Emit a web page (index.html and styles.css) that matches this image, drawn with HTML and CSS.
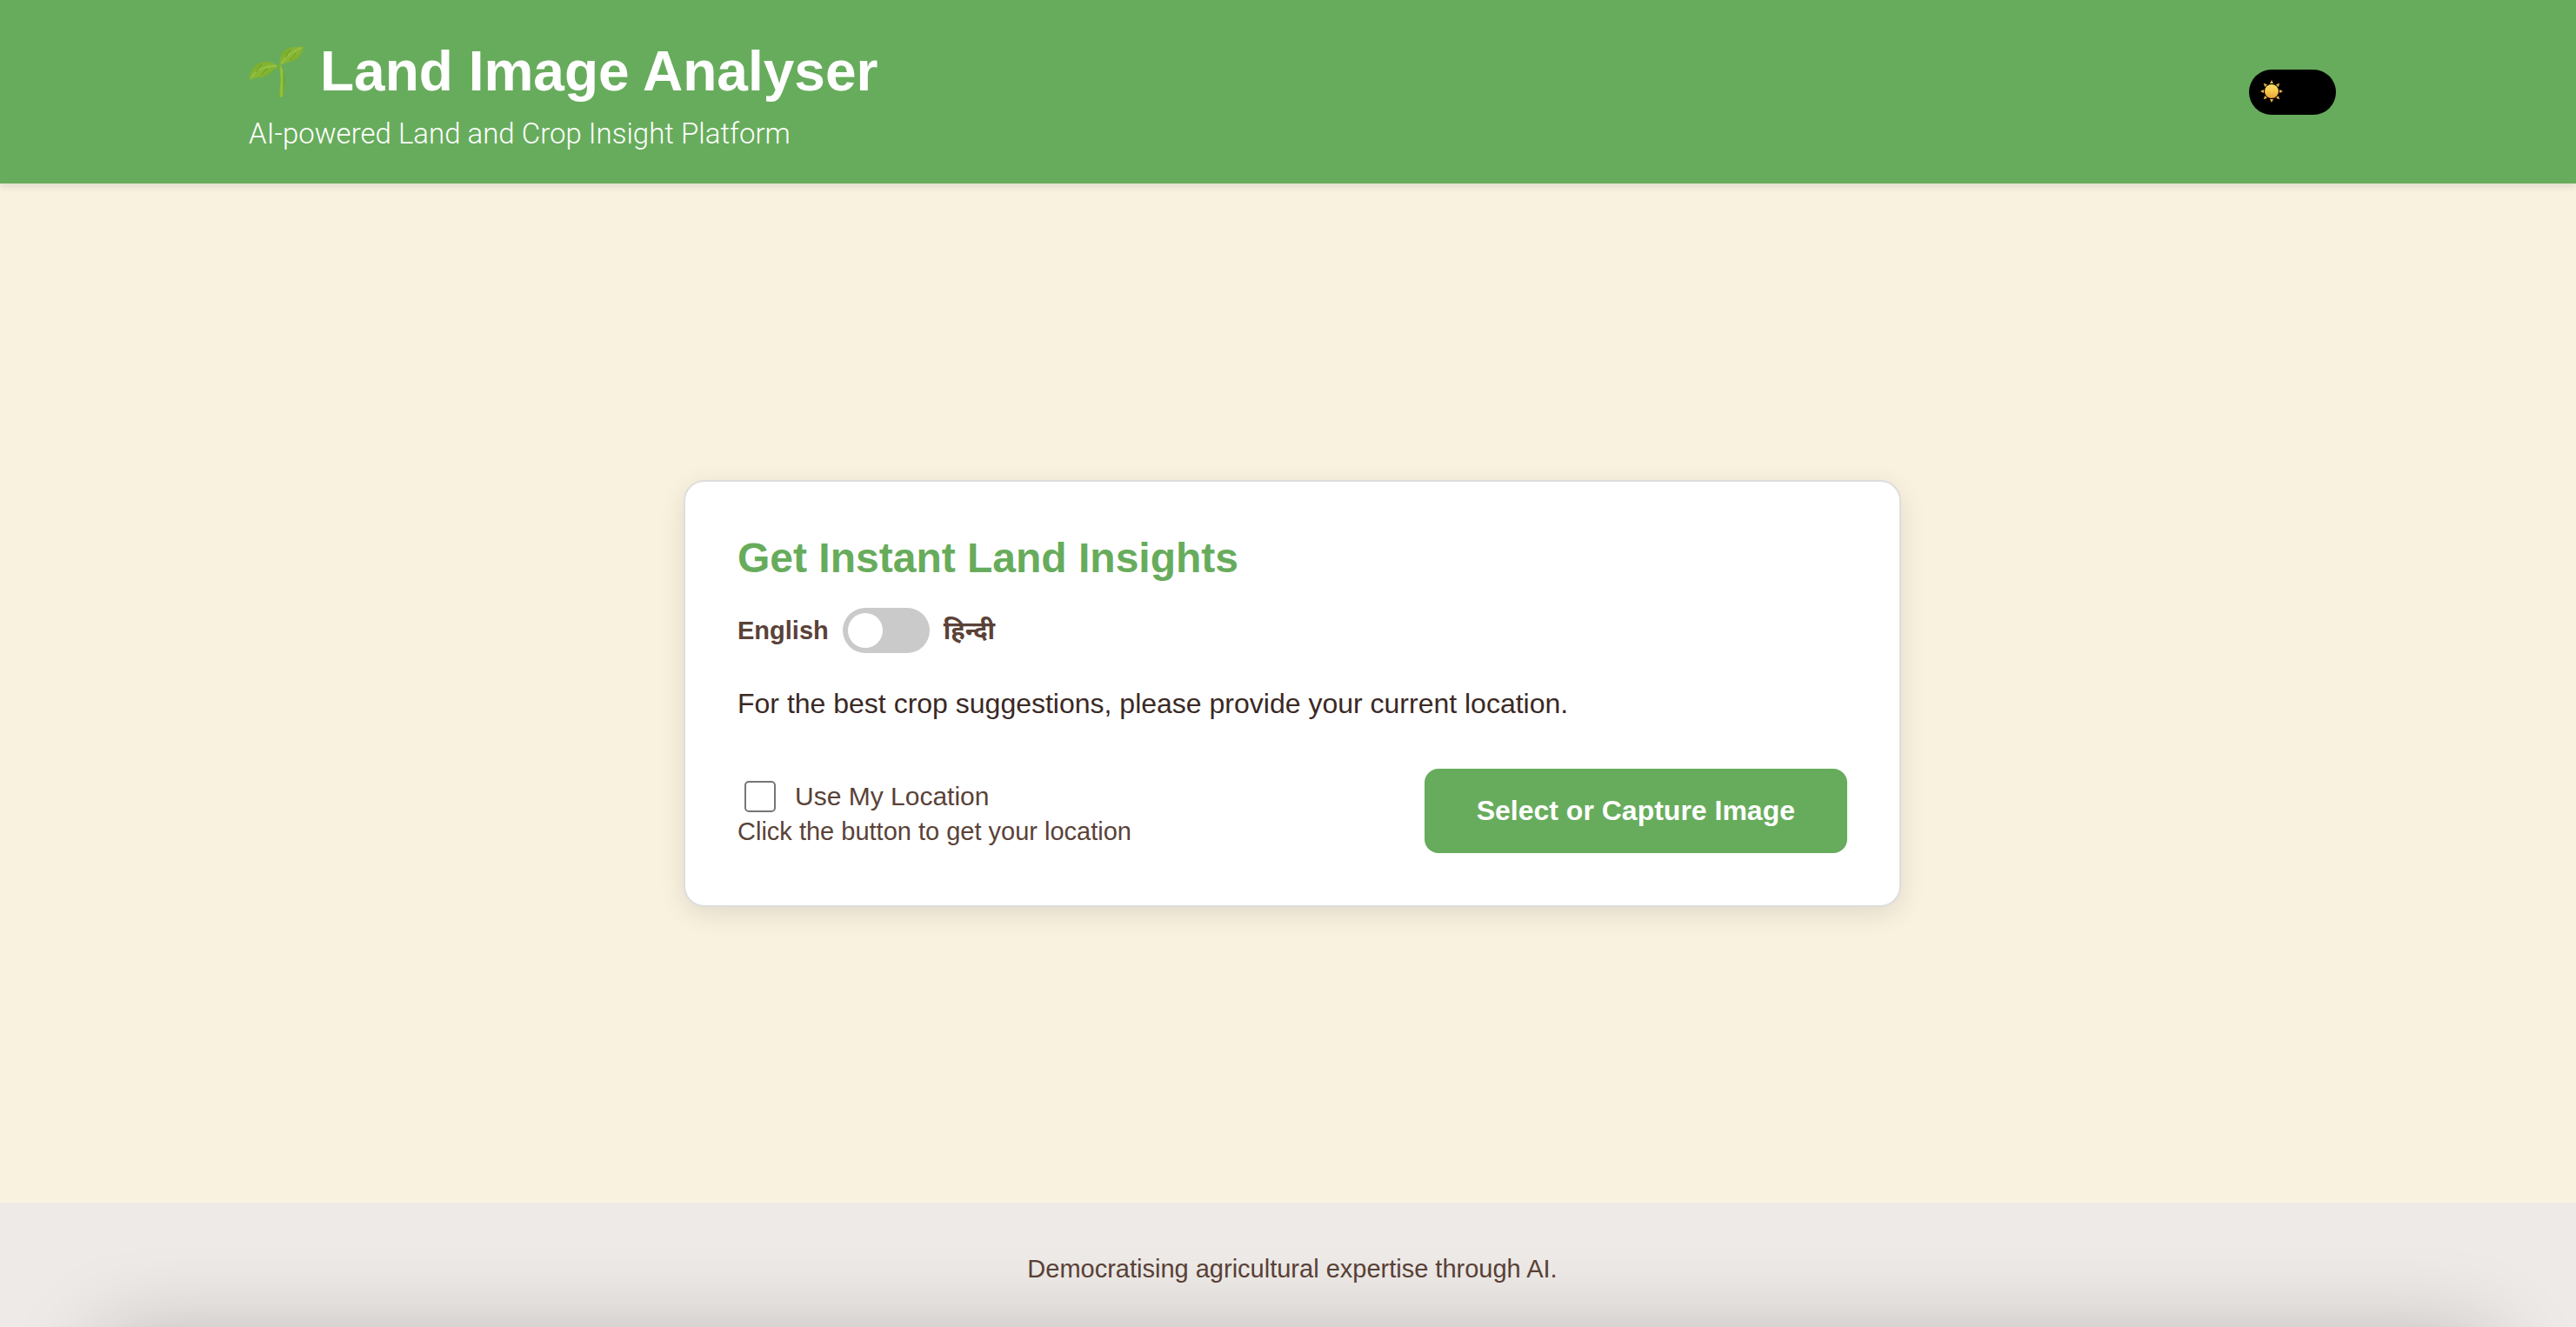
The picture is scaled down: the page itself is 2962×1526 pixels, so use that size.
FILE: index.html
```html
<!DOCTYPE html>
<html lang="en">
<head>
<meta charset="utf-8">
<meta name="viewport" content="width=device-width, initial-scale=1">
<title>Land Image Analyser</title>
<link rel="stylesheet" href="styles.css">
</head>
<body>
<header class="site-header">
  <div class="header-inner">
    <div class="brand">
      <h1 class="brand-title">
        <svg class="sprout" viewBox="0 0 64 60" aria-hidden="true">
          <defs>
            <linearGradient id="leaf" x1="0" y1="0" x2="1" y2="1">
              <stop offset="0" stop-color="#74a82c"/>
              <stop offset=".5" stop-color="#88b835"/>
              <stop offset="1" stop-color="#699c24"/>
            </linearGradient>
            <linearGradient id="stem" x1="0" y1="0" x2="1" y2="0">
              <stop offset="0" stop-color="#6aa426"/>
              <stop offset=".5" stop-color="#9cc83f"/>
              <stop offset="1" stop-color="#639c24"/>
            </linearGradient>
          </defs>
          <path d="M34 23C37 33 38 45 34 58Q36 61 39 59C43 45 42 32 36.500 23Z" fill="url(#stem)"/>
          <path d="M1 40C1 29 7 20 17 19C25 18 30 22 35 24C31 26 28 29 25 32C18 39 8 36 1 40Z" fill="url(#leaf)"/>
          <path d="M36 24C35 13 38 6 47 3C53 1 59 3 63 1C62 8 60 14 54 17C47 20 42 19 36 24Z" fill="url(#leaf)"/>
          <path d="M3 37C9 28 17 24 32 24M38 21C43 13 50 7 60 3" fill="none" stroke="#a9cc57" stroke-width="1"/>
          <path d="M9 31Q11 25 15 22M14 34Q18 29 22 27M43 14Q43 9 48 6M47 17Q52 13 54 9" fill="none" stroke="#6a9c24" stroke-width="1"/>
        </svg>
        <span>Land Image Analyser</span>
      </h1>
      <p class="tagline">AI-powered Land and Crop Insight Platform</p>
    </div>
    <button class="theme-toggle" type="button" aria-label="Switch theme">
      <svg class="sun" viewBox="0 0 28 28" aria-hidden="true">
        <defs>
          <linearGradient id="disc" x1="0" y1="0" x2="0" y2="1">
            <stop offset="0" stop-color="#fbe36a"/>
            <stop offset=".55" stop-color="#f5c548"/>
            <stop offset="1" stop-color="#eb9f3c"/>
          </linearGradient>
          <path id="ray" d="M14 1L16 5H12Z"/>
        </defs>
        <g fill="#f0b548">
          <use href="#ray"/>
          <use href="#ray" transform="rotate(45 14 14)"/>
          <use href="#ray" transform="rotate(90 14 14)"/>
          <use href="#ray" transform="rotate(135 14 14)"/>
          <use href="#ray" transform="rotate(180 14 14)"/>
          <use href="#ray" transform="rotate(225 14 14)"/>
          <use href="#ray" transform="rotate(270 14 14)"/>
          <use href="#ray" transform="rotate(315 14 14)"/>
        </g>
        <circle cx="14" cy="14" r="8" fill="url(#disc)"/>
      </svg>
    </button>
  </div>
</header>

<main class="content">
  <section class="card">
    <h2 class="card-title">Get Instant Land Insights</h2>
    <div class="language">
      <label for="language">English</label>
      <input class="switch" id="language" type="checkbox" role="switch">
      <label for="language" lang="hi">हिन्दी</label>
    </div>
    <p class="prompt">For the best crop suggestions, please provide your current location.</p>
    <div class="actions">
      <div class="location">
        <label class="location-label">
          <input class="tick" type="checkbox">
          Use My Location
        </label>
        <p class="status">Click the button to get your location</p>
      </div>
      <button class="primary" type="button">Select or Capture Image</button>
    </div>
  </section>
</main>

<footer class="site-footer">
  <p>Democratising agricultural expertise through AI.</p>
</footer>
<div class="bottom-sheet"></div>
</body>
</html>
```

FILE: styles.css
```css
* {
  box-sizing: border-box;
}

:root {
  --green: #67ac5c;
  --cream: #f9f2df;
  --brown: #5a4238;
  --dark: #3a2925;
}

body {
  display: flex;
  flex-direction: column;
  min-height: 100vh;
  margin: 0;
  background: var(--cream);
  color: var(--brown);
  font-family: "Liberation Sans", Arial, "Noto Sans", "Noto Sans Devanagari", sans-serif;
  font-size: 29px;
  line-height: 40px;
}

h1, h2, p {
  margin: 0;
}

.site-header,
.content,
.site-footer {
  padding-left: 10px;
}

.site-header {
  background: var(--green);
  color: #fff;
  box-shadow: 0 4px 8px rgba(0, 0, 0, 0.1);
}

.header-inner {
  display: flex;
  align-items: center;
  justify-content: space-between;
  max-width: 2400px;
  margin: 0 auto;
  padding: 40px 0;
}

.brand-title {
  display: flex;
  align-items: center;
  gap: 18px;
  font-size: 64px;
  line-height: 84px;
}

.sprout {
  width: 64px;
  height: 60px;
}

.tagline {
  padding-top: 13px;
  font-family: Roboto, "Liberation Sans", Arial, sans-serif;
  font-size: 33px;
  font-weight: 300;
  line-height: 34px;
}

.theme-toggle {
  display: flex;
  align-items: center;
  width: 100px;
  height: 52px;
  padding: 0 12px 2px;
  border: 0;
  border-radius: 26px;
  background: #000;
}

.sun {
  width: 28px;
  height: 28px;
}

.content {
  display: flex;
  flex: 1;
  align-items: center;
  justify-content: center;
}

.card {
  width: 100%;
  max-width: 1400px;
  padding: 60px;
  border: 2px solid #ddd;
  border-radius: 24px;
  background: #fff;
  box-shadow: 0 8px 30px rgba(0, 0, 0, 0.1);
}

.card-title {
  color: var(--green);
  font-size: 48px;
  line-height: 56px;
}

.language {
  display: flex;
  align-items: center;
  gap: 16px;
  padding: 29px 0 32px;
  font-weight: 700;
}

.switch {
  display: flex;
  align-items: center;
  width: 100px;
  height: 52px;
  margin: 0;
  padding: 6px;
  border-radius: 26px;
  background: #cacaca;
  appearance: none;
}

.switch::before {
  width: 40px;
  height: 40px;
  border-radius: 50%;
  background: #fff;
  content: "";
}

.switch:checked {
  justify-content: flex-end;
  background: var(--green);
}

.prompt {
  color: var(--dark);
  font-size: 32px;
  line-height: 52px;
}

.actions {
  display: flex;
  align-items: center;
  justify-content: space-between;
  padding-top: 49px;
}

.location {
  padding-top: 8px;
}

.location-label {
  display: flex;
  align-items: center;
  gap: 22px;
  padding-left: 8px;
  font-size: 30px;
}

.tick {
  width: 36px;
  height: 36px;
  margin: 0;
  border: 2px solid #767676;
  border-radius: 5px;
  background: #fff;
  appearance: none;
}

.tick:checked {
  background: var(--green);
}

.primary {
  padding: 28px 60px;
  border: 0;
  border-radius: 16px;
  background: var(--green);
  color: #fff;
  font: 700 32px/41px "Liberation Sans", Arial, sans-serif;
}

.site-footer {
  padding-top: 56px;
  padding-bottom: 47px;
  background: #eeeae7;
  text-align: center;
}

/* Sheet parked below the window; only its shadow reaches the page. */
.bottom-sheet {
  position: fixed;
  top: 100%;
  right: 90px;
  left: 110px;
  height: 400px;
  border-radius: 40px;
  box-shadow: 0 8px 100px rgba(0, 0, 0, 0.22);
  pointer-events: none;
}
```
